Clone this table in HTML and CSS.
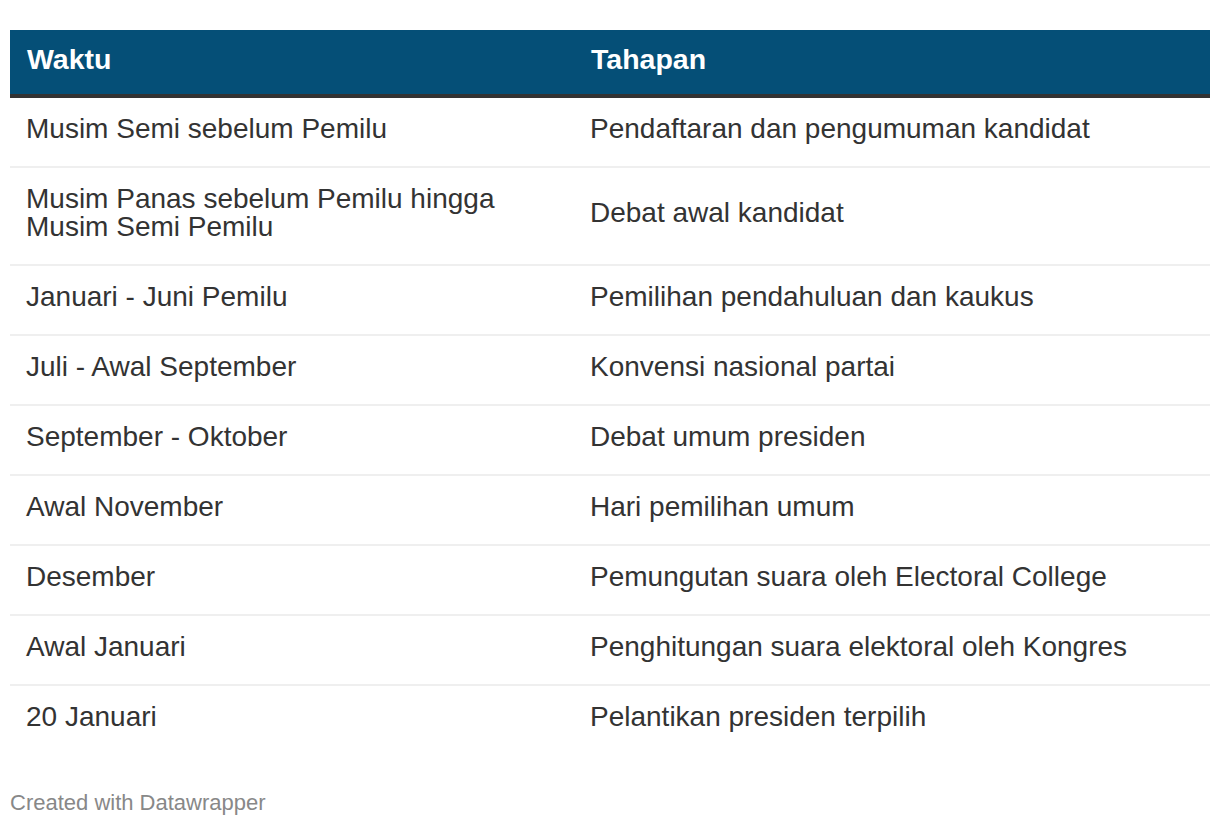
FILE: index.html
```html
<!DOCTYPE html>
<html lang="id">
<head>
<meta charset="utf-8">
<title>Tahapan Pemilu</title>
<link rel="stylesheet" href="styles.css">
</head>
<body>
<div class="chart">
  <table class="tbl">
    <colgroup><col class="c1"><col class="c2"></colgroup>
    <thead>
      <tr><th>Waktu</th><th>Tahapan</th></tr>
    </thead>
    <tbody>
      <tr><td>Musim Semi sebelum Pemilu</td><td>Pendaftaran dan pengumuman kandidat</td></tr>
      <tr><td>Musim Panas sebelum Pemilu hingga<br>Musim Semi Pemilu</td><td>Debat awal kandidat</td></tr>
      <tr><td>Januari - Juni Pemilu</td><td>Pemilihan pendahuluan dan kaukus</td></tr>
      <tr><td>Juli - Awal September</td><td>Konvensi nasional partai</td></tr>
      <tr><td>September - Oktober</td><td>Debat umum presiden</td></tr>
      <tr><td>Awal November</td><td>Hari pemilihan umum</td></tr>
      <tr><td>Desember</td><td>Pemungutan suara oleh Electoral College</td></tr>
      <tr><td>Awal Januari</td><td>Penghitungan suara elektoral oleh Kongres</td></tr>
      <tr><td>20 Januari</td><td>Pelantikan presiden terpilih</td></tr>
    </tbody>
  </table>
  <div class="footer">Created with Datawrapper</div>
</div>
</body>
</html>
```

FILE: styles.css
```css
html, body {
  margin: 0;
  padding: 0;
  background: #ffffff;
}
body {
  font-family: "Liberation Sans", Helvetica, Arial, sans-serif;
  color: #333333;
}
.chart {
  padding: 30px 10px 0 10px;
}
.tbl {
  width: 1200px;
  border-collapse: collapse;
  table-layout: fixed;
}
.c1 { width: 564px; }
.tbl th {
  background: #054f77;
  color: #ffffff;
  font-weight: bold;
  font-size: 28.5px;
  line-height: 28px;
  text-align: left;
  padding: 15px 16px 21px 17px;
  border-bottom: 4px solid #333333;
}
.tbl td {
  font-size: 28px;
  line-height: 28px;
  padding: 17px 16px 23px 16px;
  vertical-align: middle;
  border-bottom: 2px solid #efefef;
  color: #333333;
}
.tbl tbody tr:last-child td {
  border-bottom: none;
}
.footer {
  margin-top: 36px;
  font-size: 22px;
  line-height: 26px;
  color: #888888;
}
```
